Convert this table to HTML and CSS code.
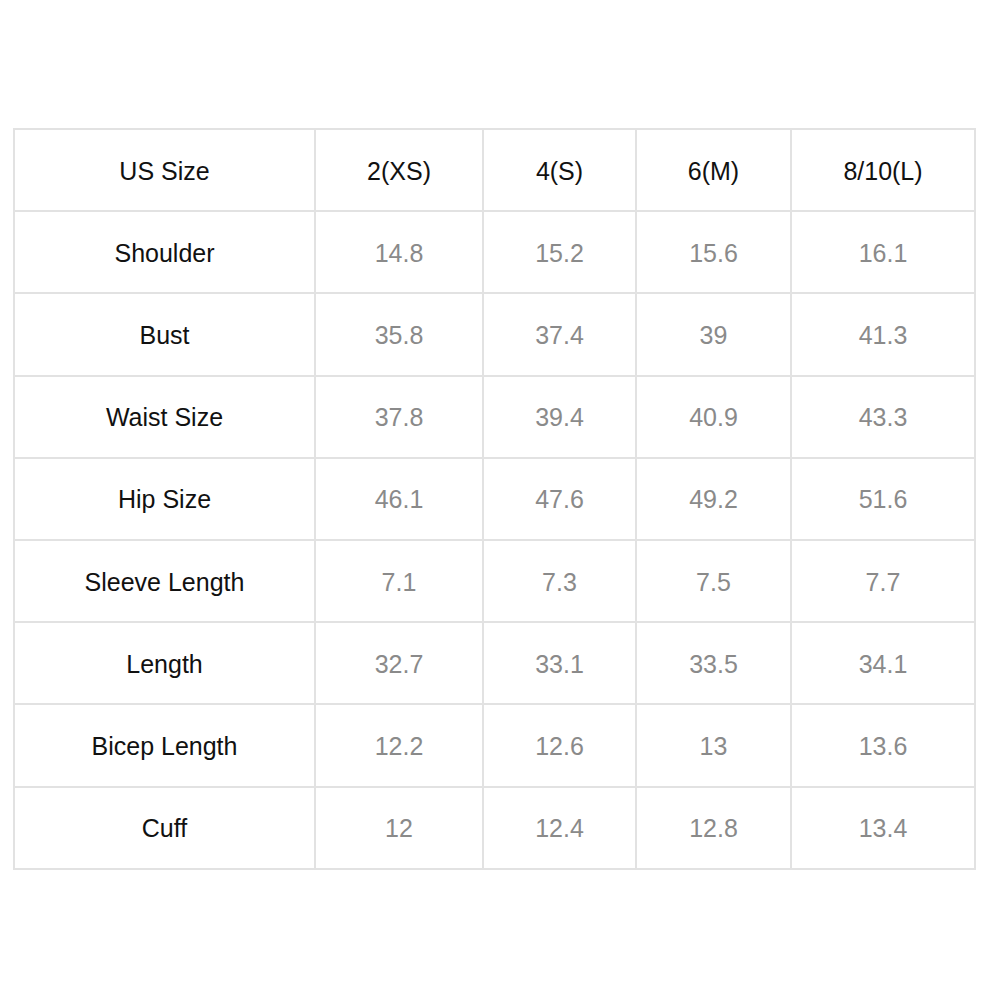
FILE: index.html
```html
<!DOCTYPE html>
<html>
<head>
<meta charset="utf-8">
<link rel="stylesheet" href="styles.css">
</head>
<body>
<div class="size-table">
  <div class="cell label">US Size</div><div class="cell label">2(XS)</div><div class="cell label">4(S)</div><div class="cell label">6(M)</div><div class="cell label">8/10(L)</div>
  <div class="cell label">Shoulder</div><div class="cell val">14.8</div><div class="cell val">15.2</div><div class="cell val">15.6</div><div class="cell val">16.1</div>
  <div class="cell label">Bust</div><div class="cell val">35.8</div><div class="cell val">37.4</div><div class="cell val">39</div><div class="cell val">41.3</div>
  <div class="cell label">Waist Size</div><div class="cell val">37.8</div><div class="cell val">39.4</div><div class="cell val">40.9</div><div class="cell val">43.3</div>
  <div class="cell label">Hip Size</div><div class="cell val">46.1</div><div class="cell val">47.6</div><div class="cell val">49.2</div><div class="cell val">51.6</div>
  <div class="cell label">Sleeve Length</div><div class="cell val">7.1</div><div class="cell val">7.3</div><div class="cell val">7.5</div><div class="cell val">7.7</div>
  <div class="cell label">Length</div><div class="cell val">32.7</div><div class="cell val">33.1</div><div class="cell val">33.5</div><div class="cell val">34.1</div>
  <div class="cell label">Bicep Length</div><div class="cell val">12.2</div><div class="cell val">12.6</div><div class="cell val">13</div><div class="cell val">13.6</div>
  <div class="cell label">Cuff</div><div class="cell val">12</div><div class="cell val">12.4</div><div class="cell val">12.8</div><div class="cell val">13.4</div>
</div>
</body>
</html>
```
FILE: styles.css
```css
html, body {
  margin: 0;
  padding: 0;
  background: #ffffff;
}
body {
  padding: 128px 0 0 13px;
  font-family: "Liberation Sans", Arial, Helvetica, sans-serif;
}
.size-table {
  display: grid;
  width: 963px;
  box-sizing: border-box;
  grid-template-columns: 299px 166px 151px 153px 182px;
  grid-auto-rows: 80.2px;
  gap: 2px;
  padding: 2px;
  background: #e2e2e2;
}
.cell {
  background: #ffffff;
  display: flex;
  align-items: center;
  justify-content: center;
  font-size: 25px;
  padding-top: 2px;
  box-sizing: border-box;
}
.label {
  color: #111111;
}
.val {
  color: #8a8a8a;
}
```
